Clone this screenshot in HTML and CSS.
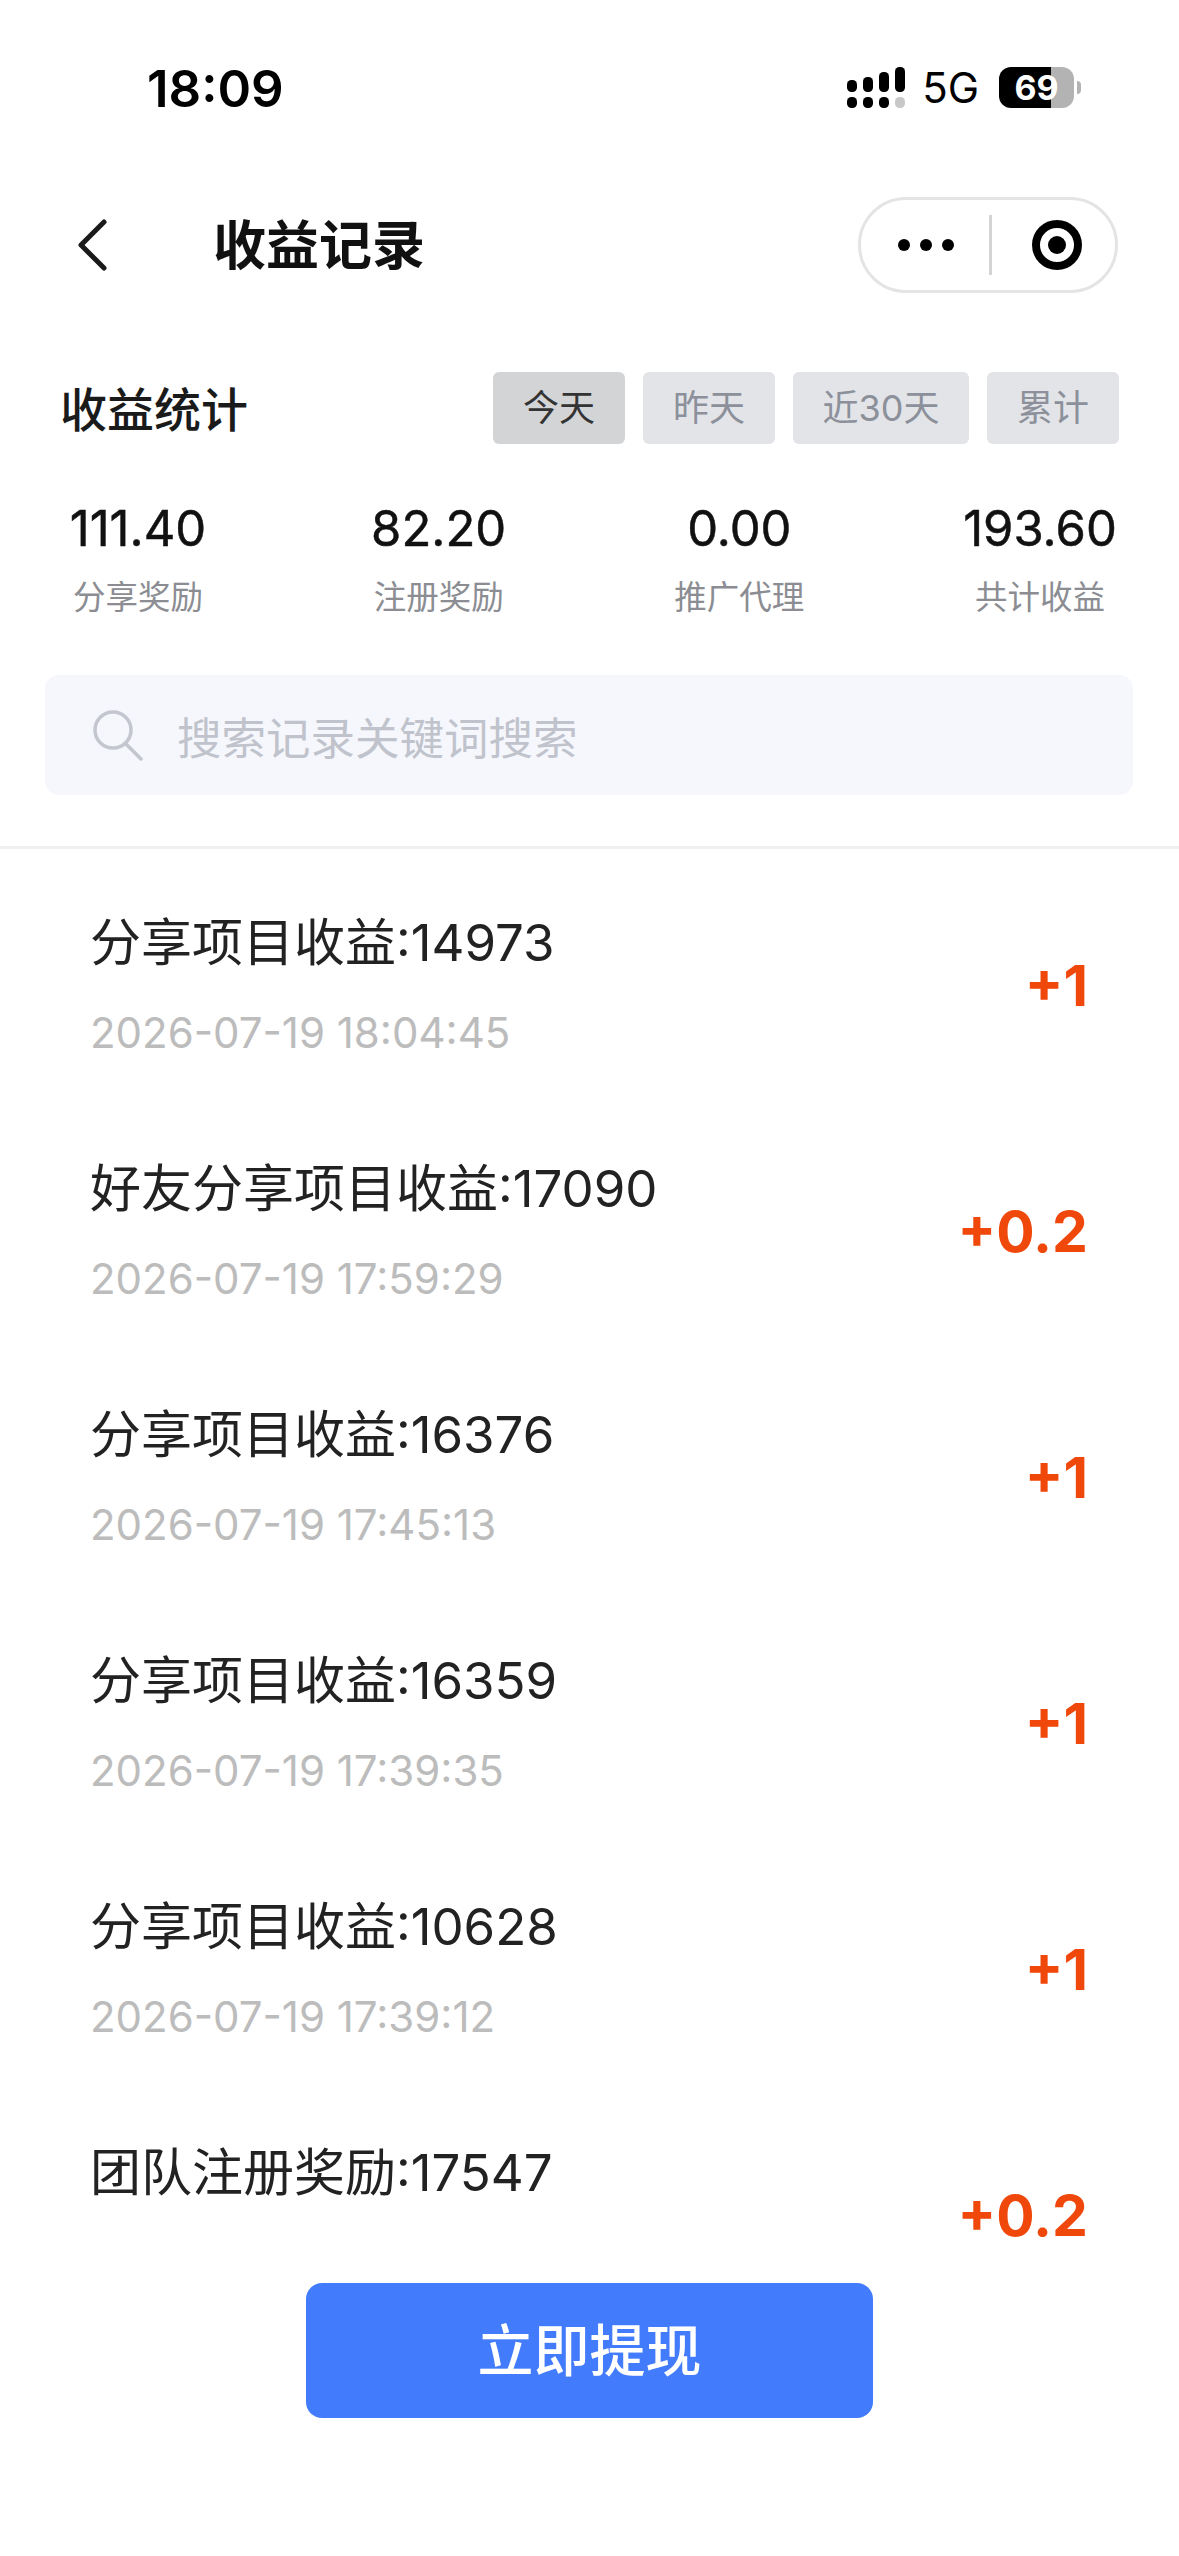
FILE: index.html
```html
<!DOCTYPE html>
<html lang="zh-CN">
<head>
    <meta charset="UTF-8">
    <meta name="viewport" content="width=device-width, initial-scale=1.0">
    <title>收益记录</title>
    <link rel="stylesheet" href="styles.css">
</head>
<body>
    <div class="page">
        <div class="status-bar">
            <span class="time">18:09</span>
            <div class="status-icons">
                <svg class="signal" width="58" height="41" viewBox="0 0 58 41">
                    <rect x="0" y="13" width="10" height="12" rx="4.5"/>
                    <rect x="16" y="10" width="10" height="15" rx="4.5"/>
                    <rect x="32" y="5" width="10" height="20" rx="4.5"/>
                    <rect x="48" y="0" width="10" height="25" rx="4.5"/>
                    <rect x="0" y="30" width="10" height="11" rx="4.5"/>
                    <rect x="16" y="30" width="10" height="11" rx="4.5"/>
                    <rect x="32" y="30" width="10" height="11" rx="4.5"/>
                    <rect x="48" y="30" width="10" height="11" rx="4.5" fill="#c8c8c8"/>
                </svg>
                <span class="network">5G</span>
                <div class="battery">69</div>
            </div>
        </div>

        <div class="nav">
            <svg class="back" width="30" height="52" viewBox="0 0 30 52">
                <path d="M27 3 L4 26 L27 49" fill="none" stroke="#1a1a1a" stroke-width="5" stroke-linecap="round" stroke-linejoin="round"/>
            </svg>
            <h1 class="nav-title">收益记录</h1>
            <div class="capsule">
                <div class="capsule-dots"><i></i><i></i><i></i></div>
                <div class="capsule-line"></div>
                <div class="capsule-target"><i></i></div>
            </div>
        </div>

        <div class="stats-head">
            <h2>收益统计</h2>
            <div class="tabs">
                <span class="tab active">今天</span>
                <span class="tab">昨天</span>
                <span class="tab wide">近30天</span>
                <span class="tab">累计</span>
            </div>
        </div>

        <div class="stats">
            <div class="stat"><b>111.40</b><span>分享奖励</span></div>
            <div class="stat"><b>82.20</b><span>注册奖励</span></div>
            <div class="stat"><b>0.00</b><span>推广代理</span></div>
            <div class="stat"><b>193.60</b><span>共计收益</span></div>
        </div>

        <div class="search">
            <svg width="52" height="52" viewBox="0 0 52 52">
                <circle cx="21" cy="21" r="18" fill="none" stroke="#c3c6ce" stroke-width="3.5"/>
                <path d="M34 35 L49 50" fill="none" stroke="#c3c6ce" stroke-width="3.5" stroke-linecap="round"/>
            </svg>
            <span>搜索记录关键词搜索</span>
        </div>

        <div class="list">
            <div class="record">
                <div><p class="record-name">分享项目收益:14973</p><p class="record-date">2026-07-19 18:04:45</p></div>
                <span class="amount">+1</span>
            </div>
            <div class="record">
                <div><p class="record-name">好友分享项目收益:17090</p><p class="record-date">2026-07-19 17:59:29</p></div>
                <span class="amount">+0.2</span>
            </div>
            <div class="record">
                <div><p class="record-name">分享项目收益:16376</p><p class="record-date">2026-07-19 17:45:13</p></div>
                <span class="amount">+1</span>
            </div>
            <div class="record">
                <div><p class="record-name">分享项目收益:16359</p><p class="record-date">2026-07-19 17:39:35</p></div>
                <span class="amount">+1</span>
            </div>
            <div class="record">
                <div><p class="record-name">分享项目收益:10628</p><p class="record-date">2026-07-19 17:39:12</p></div>
                <span class="amount">+1</span>
            </div>
            <div class="record">
                <div><p class="record-name">团队注册奖励:17547</p><p class="record-date">2026-07-19 17:38:50</p></div>
                <span class="amount">+0.2</span>
            </div>
        </div>

        <div class="footer">
            <button class="withdraw">立即提现</button>
        </div>
    </div>
</body>
</html>
```

FILE: styles.css
```css
* {
    box-sizing: border-box;
}
html, body {
    margin: 0;
    padding: 0;
    background: #fff;
}
body {
    font-family: Inter, "Noto Sans CJK SC", sans-serif;
    color: #1c1c1e;
}
p, h1, h2 {
    margin: 0;
}
.page {
    position: relative;
    width: 1179px;
    height: 2556px;
    overflow: hidden;
}

/* status bar */
.status-bar {
    height: 197px;
    padding: 62px 105px 0 147px;
    display: flex;
    justify-content: space-between;
    align-items: flex-start;
}
.time {
    font-size: 51px;
    line-height: 54px;
    font-weight: 600;
    color: #000;
}
.status-icons {
    display: flex;
    align-items: center;
    height: 41px;
    margin-top: 5px;
}
.network {
    margin-left: 17px;
    font-size: 42px;
    line-height: 41px;
    color: #000;
}
.battery {
    position: relative;
    margin-left: 20px;
    width: 75px;
    height: 41px;
    border-radius: 12px;
    background: linear-gradient(90deg, #000 69%, #b3b3b3 69%);
    color: #fff;
    font-size: 34px;
    font-weight: 700;
    line-height: 41px;
    text-align: center;
}
.battery:after {
    content: "";
    position: absolute;
    left: 78px;
    top: 14px;
    width: 4px;
    height: 13px;
    border-radius: 0 6px 6px 0;
    background: #b3b3b3;
}

/* nav */
.nav {
    height: 95px;
    padding: 0 61px 0 77px;
    display: flex;
    align-items: center;
}
.nav-title {
    margin: -6px 0 0 106px;
    font-size: 53px;
    font-weight: 700;
    color: #111;
}
.capsule {
    margin-left: auto;
    width: 260px;
    height: 96px;
    border: 3px solid #e4e4e4;
    border-radius: 48px;
    display: flex;
    align-items: center;
}
.capsule-dots {
    width: 128px;
    padding-left: 37px;
    display: flex;
    gap: 10px;
}
.capsule-dots i {
    width: 12px;
    height: 12px;
    border-radius: 50%;
    background: #000;
}
.capsule-line {
    width: 3px;
    height: 60px;
    background: #d4d4d4;
}
.capsule-target {
    margin-left: 40px;
    width: 50px;
    height: 50px;
    border: 8px solid #000;
    border-radius: 50%;
    display: flex;
    align-items: center;
    justify-content: center;
}
.capsule-target i {
    width: 18px;
    height: 18px;
    border-radius: 50%;
    background: #000;
}

/* stats */
.stats-head {
    margin-top: 80px;
    height: 72px;
    padding: 0 60px 0 60px;
    display: flex;
    justify-content: space-between;
    align-items: center;
}
.stats-head h2 {
    margin-top: -4px;
    font-size: 47px;
    font-weight: 500;
    color: #1a1a1a;
}
.tabs {
    display: flex;
    gap: 18px;
}
.tab {
    width: 132px;
    height: 72px;
    border-radius: 6px;
    background: #e2e4e8;
    color: #8c909a;
    font-size: 36px;
    line-height: 72px;
    text-align: center;
}
.tab.wide {
    width: 176px;
}
.tab.active {
    background: #d3d4d6;
    color: #333;
}
.stats {
    margin-top: 56px;
    padding: 0 59px 0 58px;
    display: flex;
    justify-content: space-between;
}
.stat {
    width: 160px;
    display: flex;
    flex-direction: column;
    align-items: center;
    white-space: nowrap;
}
.stat b {
    font-size: 49px;
    font-weight: 400;
    line-height: 58px;
    color: #111;
    -webkit-text-stroke: 0.5px #111;
}
.stat span {
    margin-top: 17px;
    font-size: 32.5px;
    line-height: 46px;
    color: #8b8d93;
}

/* search */
.search {
    margin: 54px 46px 0 45px;
    height: 120px;
    padding-left: 47px;
    border-radius: 14px;
    background: #f5f7fc;
    display: flex;
    align-items: center;
}
.search span {
    margin-left: 33px;
    font-size: 44.5px;
    color: #c0c3cc;
}

/* list */
.list {
    margin-top: 51px;
    padding-top: 15px;
    border-top: 3px solid #eeeff1;
}
.record {
    height: 246px;
    padding: 0 91px 0 90px;
    display: flex;
    justify-content: space-between;
    align-items: center;
}
.record-name {
    position: relative;
    top: 2px;
    font-size: 51px;
    line-height: 70px;
    color: #222;
}
.record-date {
    margin-top: 22px;
    font-size: 42px;
    line-height: 70px;
    color: #bcbcbc;
}
.amount {
    margin-bottom: 4px;
    font-size: 57px;
    font-weight: 700;
    color: #f0480a;
}

/* bottom button, sits over the list */
.footer {
    position: absolute;
    left: 0;
    right: 0;
    bottom: 0;
    height: 309px;
    background: #fff;
    display: flex;
    justify-content: center;
    padding-top: 36px;
}
.withdraw {
    width: 567px;
    height: 135px;
    padding: 0 0 8px;
    border: 0;
    border-radius: 16px;
    background: #427cfc;
    color: #fff;
    font-family: inherit;
    font-size: 56px;
    font-weight: 500;
}
```
